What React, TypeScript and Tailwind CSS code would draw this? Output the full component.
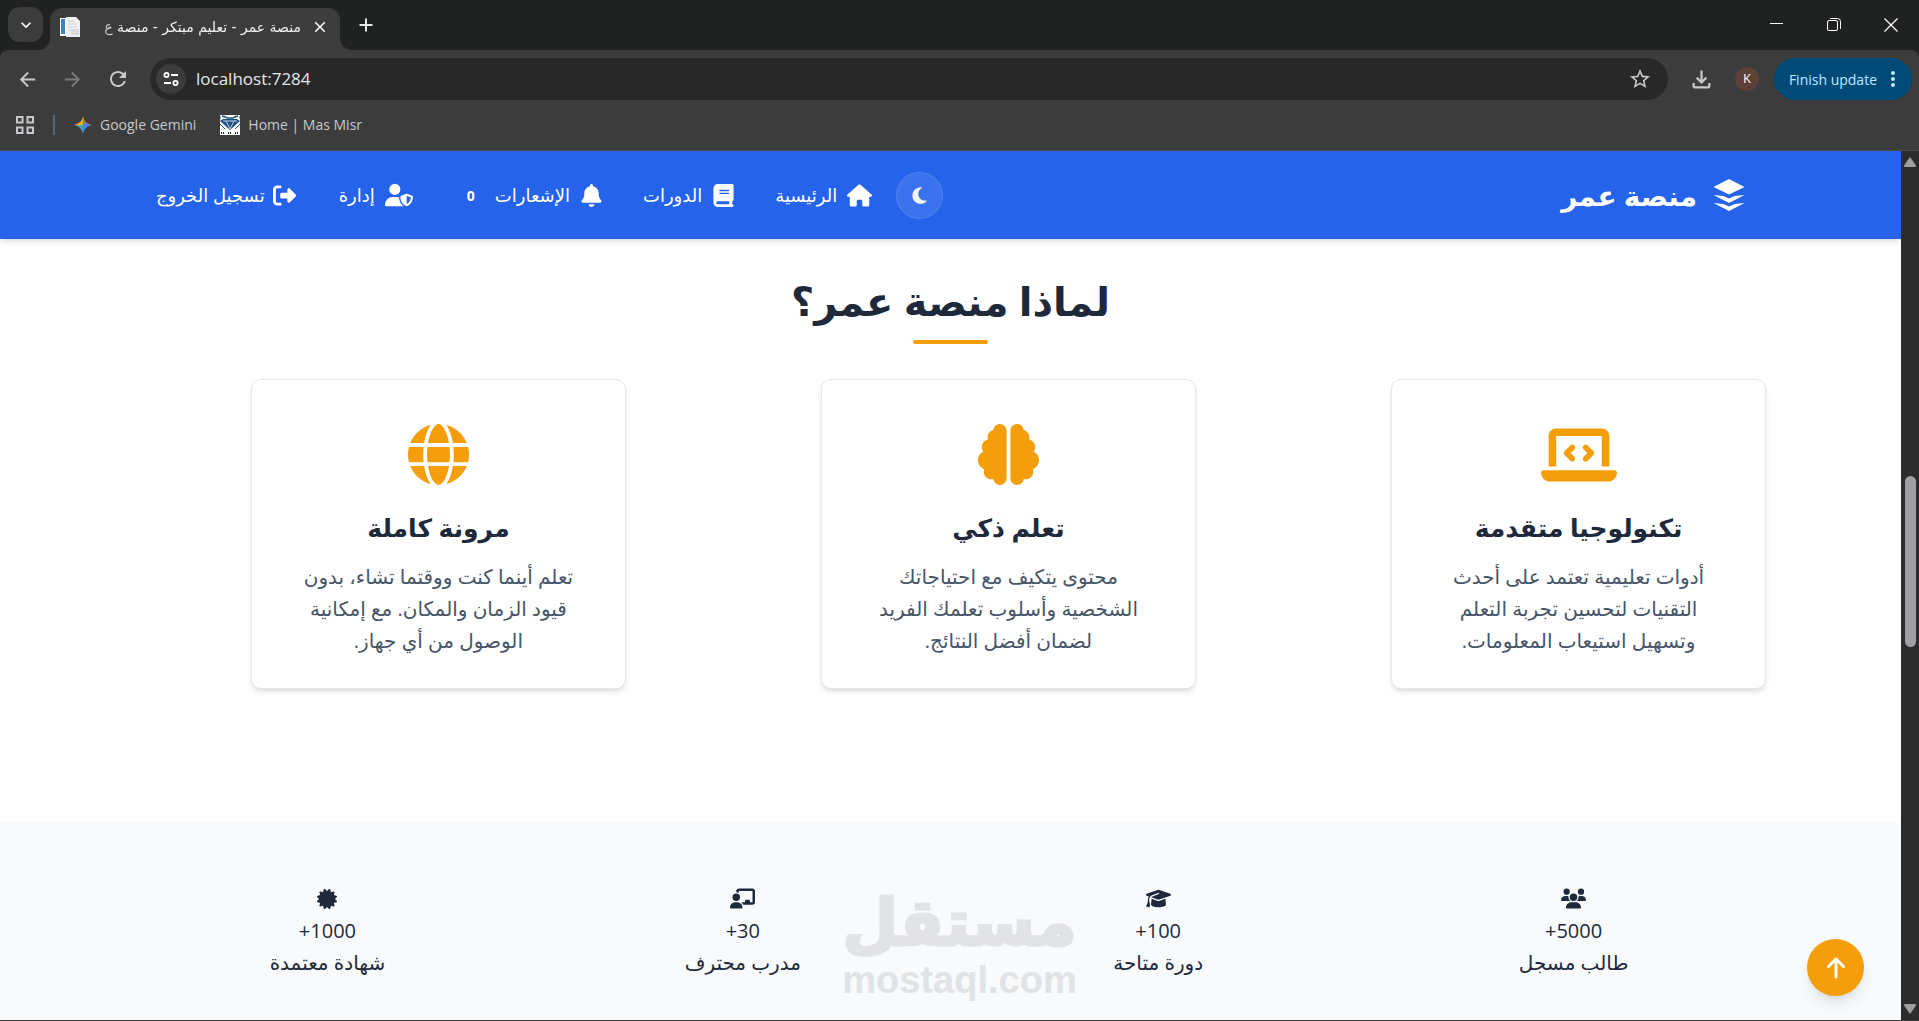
import type { IconType } from 'react-icons';
import {
  FaArrowUp,
  FaBell,
  FaBook,
  FaBrain,
  FaCertificate,
  FaChalkboardUser,
  FaGlobe,
  FaGraduationCap,
  FaHouse,
  FaLaptopCode,
  FaMoon,
  FaRightFromBracket,
  FaUserShield,
  FaUsers,
} from 'react-icons/fa6';
import {
  MdArrowBack,
  MdArrowForward,
  MdClose,
  MdKeyboardArrowDown,
  MdMoreVert,
  MdOutlineFileDownload,
  MdRefresh,
  MdStarBorder,
} from 'react-icons/md';

interface Item {
  title: string;
  icon: IconType;
  iconSize: number;
}

interface Feature extends Item {
  lines: string[];
}

interface Stat extends Item {
  value: string;
}

const features: Feature[] = [
  {
    title: 'تكنولوجيا متقدمة',
    icon: FaLaptopCode,
    iconSize: 76,
    lines: ['أدوات تعليمية تعتمد على أحدث', 'التقنيات لتحسين تجربة التعلم', 'وتسهيل استيعاب المعلومات.'],
  },
  {
    title: 'تعلم ذكي',
    icon: FaBrain,
    iconSize: 61,
    lines: ['محتوى يتكيف مع احتياجاتك', 'الشخصية وأسلوب تعلمك الفريد', 'لضمان أفضل النتائج.'],
  },
  {
    title: 'مرونة كاملة',
    icon: FaGlobe,
    iconSize: 61,
    lines: ['تعلم أينما كنت ووقتما تشاء، بدون', 'قيود الزمان والمكان. مع إمكانية', 'الوصول من أي جهاز.'],
  },
];

const stats: Stat[] = [
  { value: '5000+', title: 'طالب مسجل', icon: FaUsers, iconSize: 25 },
  { value: '100+', title: 'دورة متاحة', icon: FaGraduationCap, iconSize: 25 },
  { value: '30+', title: 'مدرب محترف', icon: FaChalkboardUser, iconSize: 25 },
  { value: '1000+', title: 'شهادة معتمدة', icon: FaCertificate, iconSize: 20 },
];

function TabStrip() {
  return (
    <div className="flex h-[50px] shrink-0 items-end bg-[#202221]">
      <button aria-label="Search tabs" className="mb-2 ml-2 flex size-[35px] items-center justify-center rounded-xl bg-[#3c3c3c] text-white">
        <MdKeyboardArrowDown size={20} />
      </button>
      <div className="relative ml-[7px] flex h-[42px] w-[290px] items-center rounded-t-xl bg-[#3c3c3c] pr-[11px] pb-1 pl-[10px] before:absolute before:right-full before:bottom-0 before:size-3 before:bg-[radial-gradient(circle_at_0_0,transparent_12px,#3c3c3c_12px)] after:absolute after:bottom-0 after:left-full after:size-3 after:bg-[radial-gradient(circle_at_100%_0,transparent_12px,#3c3c3c_12px)]">
        <svg width="20" height="20" viewBox="0 0 20 20" className="shrink-0">
          <path d="M0 1h14v18H0z" fill="#fff" />
          <path d="M1 2h4v15H1z" fill="#3b82c4" />
          <path d="M6 0h10l4 4v16H6z" fill="#f1f1f3" />
          <path d="M8 4h7M8 7h9M8 10h9M8 13h3" stroke="#cfd0d4" />
          <path d="M11 12h8v6h-8z" fill="#d9dade" />
        </svg>
        <span dir="rtl" className="mx-[10px] flex-1 whitespace-nowrap font-['DejaVu_Sans',sans-serif] text-[14px] text-gray-100 [mask-image:linear-gradient(to_right,transparent,black_24px)]">
          منصة عمر - تعليم مبتكر - منصة ع
        </span>
        <button aria-label="Close tab" className="text-white">
          <MdClose size={18} />
        </button>
      </div>
      <button aria-label="New tab" className="mb-[15px] ml-[18px] text-gray-200">
        <svg width="16" height="20" viewBox="0 0 16 20" fill="none" stroke="currentColor" strokeWidth="2">
          <path d="M8 3.500v13M1.500 10h13" />
        </svg>
      </button>
      <div className="ml-auto flex h-full items-center gap-[43px] pr-[21px] text-white">
        <button aria-label="Minimize">
          <svg width="14" height="14" viewBox="0 0 14 14" fill="none" stroke="currentColor">
            <path d="M0 5.500h13" />
          </svg>
        </button>
        <button aria-label="Restore">
          <svg width="14" height="14" viewBox="0 0 14 14" fill="none" stroke="currentColor">
            <rect x="0.500" y="2.500" width="10" height="10" rx="1.500" />
            <path d="M3 .5h7.500a3 3 0 0 1 3 3V11" />
          </svg>
        </button>
        <button aria-label="Close">
          <svg width="14" height="14" viewBox="0 0 14 14" fill="none" stroke="currentColor" strokeWidth="1.200">
            <path d="M.5.5l13 13M13.500.5l-13 13" />
          </svg>
        </button>
      </div>
    </div>
  );
}

function Toolbar() {
  return (
    <div className="shrink-0 bg-[#202221]">
      <div className="flex h-[58px] items-center rounded-t-lg bg-[#3c3c3c] pr-[7px] pl-4 font-['Open_Sans',sans-serif] text-[#c7c9cc]">
        <button aria-label="Back" className="mr-[22px]"><MdArrowBack size={23} /></button>
        <button aria-label="Forward" className="mr-[22px] text-[#77797c]"><MdArrowForward size={23} /></button>
        <button aria-label="Reload" className="mr-5"><MdRefresh size={24} /></button>
        <div className="flex h-[42px] flex-1 items-center rounded-full bg-[#282828] pr-4 pl-[6px]">
          <button aria-label="Site information" className="flex size-[30px] items-center justify-center rounded-full bg-[#3c3c3c] text-white">
            <svg width="16" height="14" viewBox="0 0 16 14" fill="none" stroke="currentColor" strokeWidth="1.800">
              <circle cx="3.500" cy="3" r="2.100" />
              <path d="M8 3h7M1 11h7" />
              <circle cx="12.500" cy="11" r="2.100" />
            </svg>
          </button>
          <input
            aria-label="Address"
            defaultValue="localhost:7284"
            className="ml-[10px] flex-1 bg-transparent text-[17px] text-gray-200 outline-none"
          />
          <button aria-label="Bookmark this page"><MdStarBorder size={24} /></button>
        </div>
        <button aria-label="Downloads" className="ml-5"><MdOutlineFileDownload size={27} /></button>
        <button aria-label="Profile" className="ml-5 flex size-6 items-center justify-center rounded-full bg-[#5d4037] text-[13px] text-white">K</button>
        <button className="ml-[15px] flex h-[42px] items-center gap-1 rounded-full bg-[#004a77] pr-[7px] pl-[15px] text-[14px] text-[#c2e7ff]">
          Finish update
          <MdMoreVert size={24} />
        </button>
      </div>
    </div>
  );
}

function BookmarksBar() {
  return (
    <div className="flex h-[43px] shrink-0 items-center border-b border-[#4a4a4a] bg-[#3c3c3c] pb-[9px] pl-4 font-['Open_Sans',sans-serif] text-[14px] text-[#c7c9cc]">
      <button aria-label="Apps">
        <svg width="18" height="18" viewBox="0 0 18 18" fill="none" stroke="currentColor" strokeWidth="2">
          <path d="M1 1h5.500v5.500H1zM11.500 1H17v5.500h-5.500zM1 11.500h5.500V17H1zM11.500 11.500H17V17h-5.500z" />
        </svg>
      </button>
      <div className="mx-[19px] h-5 w-[2px] bg-[#5b6770]" />
      <a href="#gemini" className="flex items-center gap-2">
        <svg width="18" height="18" viewBox="0 0 20 20">
          <path d="M10 0c1 5 4 9 10 10H0c6-1 9-5 10-10z" fill="#e8710a" />
          <path d="M10 20c-1-5-4-9-10-10h10z" fill="#4ba3c7" />
          <path d="M0 10c5-1 8-3 10-8v8z" fill="#fbab1c" />
          <path d="M10 3c1 4 4 6.500 10 7-6 1-9 5-10 10z" fill="#4285f4" />
        </svg>
        Google Gemini
      </a>
      <a href="#masmisr" className="ml-6 flex items-center gap-2">
        <svg width="20" height="20" viewBox="0 0 20 20">
          <path d="M0 0h20v20H0z" fill="#fff" />
          <path d="M2 1l3 1M15 2l3-1M4 1l3 2h6l3-2" fill="none" stroke="#1d4f80" strokeWidth="1.500" />
          <path d="M0 6l3-2h14l3 2-10 9z" fill="#1d4f80" />
          <path d="M3 6h14M6 6l4 8 4-8" fill="none" stroke="#b8d4ee" />
          <path d="M0 1v3M20 1v3M0 9l5 5M20 9l-5 5" fill="none" stroke="#1d4f80" />
          <path d="M1 18h4M8 18h4M15 18h4" fill="none" stroke="#222" strokeWidth="2" strokeDasharray="1 1" />
        </svg>
        Home | Mas Misr
      </a>
    </div>
  );
}

function Navbar() {
  return (
    <nav className="relative flex h-[88px] shrink-0 items-center justify-between bg-[#2563eb] px-[8.2%] text-white shadow-md">
      <a href="#home" className="flex items-center gap-4 text-[28px] font-bold">
        <svg width="32" height="32" viewBox="0 0 31 32" fill="currentColor">
          <path d="M15.500 0L31 8l-15.500 7.500L0 8z" />
          <path d="M0 16l10 1 5.500 2.500L21 17l10-1-15.500 8z" />
          <path d="M0 24l10 1 5.500 2.500L21 25l10-1-15.500 8z" />
        </svg>
        منصة عمر
      </a>
      <div className="flex items-center text-[18px]">
        <button aria-label="الوضع الليلي" className="flex size-[47px] items-center justify-center rounded-full border border-white/10 bg-white/10">
          <FaMoon size={19} className="text-gray-100" />
        </button>
        <a href="#home" className="mr-6 flex items-center gap-[10px]">
          <FaHouse size={25} />
          الرئيسية
        </a>
        <a href="#courses" className="mr-10 flex items-center gap-[10px]">
          <FaBook size={23} />
          الدورات
        </a>
        <a href="#notifications" className="mr-10 flex items-center gap-[10px]">
          <FaBell size={23} />
          الإشعارات
          <span className="mr-[10px] text-[14px] font-bold">0</span>
        </a>
        <a href="#admin" className="mr-[54px] flex items-center gap-[10px]">
          <FaUserShield size={28} />
          إدارة
        </a>
        <a href="#logout" className="mr-[43px] flex items-center gap-2">
          <FaRightFromBracket size={23} />
          تسجيل الخروج
        </a>
      </div>
    </nav>
  );
}

function Features() {
  return (
    <section className="h-[584px] shrink-0 bg-white pt-8">
      <h2 className="text-center text-[40px] leading-[60px] font-bold text-[#1e293b]">لماذا منصة عمر؟</h2>
      <div className="mx-auto mt-[9px] h-1 w-[75px] rounded-xs bg-[#f59e0b]" />
      <div className="mt-[35px] flex justify-between pr-[7.1%] pl-[13.2%]">
        {features.map((item) => (
          <article
            key={item.title}
            className="flex h-[310px] w-[375px] flex-col items-center rounded-[10px] border border-gray-200 bg-white pt-11 text-center shadow-md"
          >
            <div className="flex h-[61px] items-center text-[#f59e0b]">
              <item.icon size={item.iconSize} />
            </div>
            <h3 className="mt-6 text-[25px] leading-9 font-bold text-[#1e293b]">{item.title}</h3>
            <p className="mt-4 text-[20px] leading-8 whitespace-nowrap text-[#475569]">
              {item.lines.map((line) => (
                <span key={line} className="block">{line}</span>
              ))}
            </p>
          </article>
        ))}
      </div>
    </section>
  );
}

function Stats() {
  return (
    <section className="relative min-h-0 flex-1 bg-[#f8fafc] px-[6.3%] pt-[65px]">
      <div className="grid grid-cols-4">
        {stats.map((item) => (
          <div key={item.title} className="flex flex-col items-center text-[20px] leading-8 text-[#1e293b]">
            <div className="mb-[6px] flex h-[21px] items-center">
              <item.icon size={item.iconSize} />
            </div>
            <span>{item.value}</span>
            <span>{item.title}</span>
          </div>
        ))}
      </div>
      <button aria-label="العودة للأعلى" className="absolute right-[37px] bottom-6 flex size-[57px] items-center justify-center rounded-full bg-[#f59e0b] text-white shadow-lg">
        <FaArrowUp size={24} />
      </button>
    </section>
  );
}

function Watermark() {
  return (
    <div
      dir="rtl"
      className="pointer-events-none absolute bottom-5 left-1/2 flex -translate-x-1/2 flex-col items-center font-bold text-[#e2e3e5]"
    >
      <span className="font-['DejaVu_Sans',sans-serif] text-[64px] leading-[74px] [-webkit-text-stroke:3px_#e2e3e5]">مستقل</span>
      <span className="font-['Liberation_Sans',sans-serif] text-[38px] leading-10">mostaql.com</span>
    </div>
  );
}

function Scrollbar() {
  return (
    <div className="flex w-[18px] shrink-0 flex-col items-center bg-[#2c2c2c] py-[6px]">
      <svg width="12" height="10" viewBox="0 0 12 10" fill="#9f9f9f"><path d="M6 0l6 8.500q0 1.500-1 1.500H1Q0 10 0 8.500z" /></svg>
      <div className="mt-[309px] h-[171px] w-[11px] rounded-full bg-[#9fa0a4]" />
      <svg width="12" height="10" viewBox="0 0 12 10" fill="#9f9f9f" className="mt-auto"><path d="M6 10L0 1.500Q0 0 1 0h10q1 0 1 1.500z" /></svg>
    </div>
  );
}

export default function App() {
  return (
    <div className="relative flex h-screen flex-col overflow-hidden border-b border-[#3c3c3c]">
      <TabStrip />
      <Toolbar />
      <BookmarksBar />
      <div className="flex min-h-0 flex-1">
        <main dir="rtl" className="flex min-w-0 flex-1 flex-col overflow-hidden font-['Open_Sans','DejaVu_Sans',sans-serif]">
          <Navbar />
          <Features />
          <Stats />
        </main>
        <Scrollbar />
      </div>
      <Watermark />
    </div>
  );
}
